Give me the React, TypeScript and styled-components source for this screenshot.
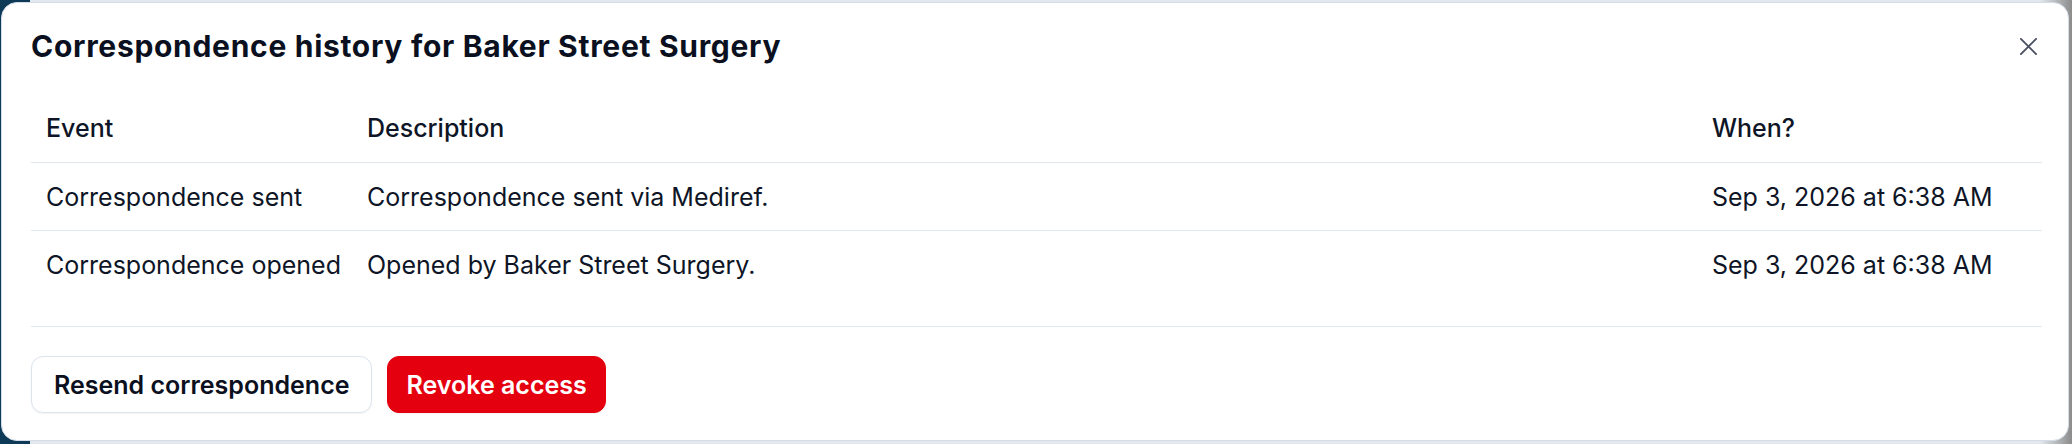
import React from 'react';
import styled, { createGlobalStyle } from 'styled-components';

const GlobalStyle = createGlobalStyle`
  * {
    margin: 0;
    padding: 0;
    box-sizing: border-box;
  }
  body {
    font-family: Inter, "Noto Sans", sans-serif;
    color: #0e1526;
    background: #dfe4ea;
  }
`;

const Backdrop = styled.div`
  width: 2072px;
  height: 444px;
  padding: 2px 3px 3px 1px;
  background: linear-gradient(90deg, #0e3a57 0, #0e3a57 30px, #e3e8ee 30px, #e3e8ee 2040px, #8b8b8b 2072px);
`;

const Modal = styled.div`
  height: 100%;
  display: flex;
  flex-direction: column;
  background: #ffffff;
  border: 1px solid #d3dce7;
  border-radius: 16px;
  padding: 24px 26px 0 29px;
`;

const Header = styled.div`
  display: flex;
  align-items: center;
  justify-content: space-between;
  height: 38px;
`;

const Title = styled.h2`
  font-size: 30px;
  font-weight: 700;
  letter-spacing: 0.7px;
  color: #0b1020;
`;

const CloseButton = styled.button`
  display: flex;
  align-items: center;
  justify-content: center;
  width: 30px;
  height: 30px;
  margin-right: -1px;
  border: none;
  background: none;
  color: #4b5060;
  cursor: pointer;
`;

const Table = styled.div`
  margin-top: 29px;
  display: flex;
  flex-direction: column;
`;

const Row = styled.div<{ $head?: boolean; $last?: boolean }>`
  display: grid;
  grid-template-columns: 321px 1fr 345px;
  align-items: center;
  height: ${(p) => (p.$head ? '69px' : '68px')};
  border-bottom: ${(p) => (p.$last ? 'none' : '1.5px solid #e3e8f0')};
  font-size: 25px;
  font-weight: ${(p) => (p.$head ? 500 : 400)};
  color: #0e1526;
`;

const Cell = styled.div`
  padding-left: 15px;
  white-space: nowrap;
`;

const Footer = styled.div`
  margin-top: 27px;
  border-top: 1.5px solid #e3e8f0;
  padding-top: 29px;
  display: flex;
  gap: 15px;
`;

const Button = styled.button<{ $danger?: boolean }>`
  height: 57px;
  padding: ${(p) => (p.$danger ? '0 18px' : '0 22px')};
  border-radius: 12px;
  font-family: Inter, "Noto Sans", sans-serif;
  font-size: 25px;
  font-weight: 600;
  cursor: pointer;
  border: 1.5px solid ${(p) => (p.$danger ? '#e4000f' : '#dce4ee')};
  background: ${(p) => (p.$danger ? '#e4000f' : '#ffffff')};
  color: ${(p) => (p.$danger ? '#ffffff' : '#0b1020')};
  box-shadow: 0 1px 2px rgba(15, 23, 42, 0.05);
`;

const events = [
  { event: 'Correspondence sent', description: 'Correspondence sent via Mediref.', when: 'Sep 3, 2026 at 6:38 AM' },
  { event: 'Correspondence opened', description: 'Opened by Baker Street Surgery.', when: 'Sep 3, 2026 at 6:38 AM' },
];

export default function App() {
  return (
    <>
      <GlobalStyle />
      <Backdrop>
        <Modal>
          <Header>
            <Title>Correspondence history for Baker Street Surgery</Title>
            <CloseButton aria-label="Close">
              <svg width="19" height="19" viewBox="0 0 20 20" fill="none" stroke="currentColor" strokeWidth="2" strokeLinecap="round">
                <path d="M2 2L18 18M18 2L2 18" />
              </svg>
            </CloseButton>
          </Header>
          <Table>
            <Row $head>
              <Cell>Event</Cell>
              <Cell>Description</Cell>
              <Cell>When?</Cell>
            </Row>
            {events.map((e, i) => (
              <Row key={i} $last={i === events.length - 1}>
                <Cell>{e.event}</Cell>
                <Cell>{e.description}</Cell>
                <Cell>{e.when}</Cell>
              </Row>
            ))}
          </Table>
          <Footer>
            <Button>Resend correspondence</Button>
            <Button $danger>Revoke access</Button>
          </Footer>
        </Modal>
      </Backdrop>
    </>
  );
}
